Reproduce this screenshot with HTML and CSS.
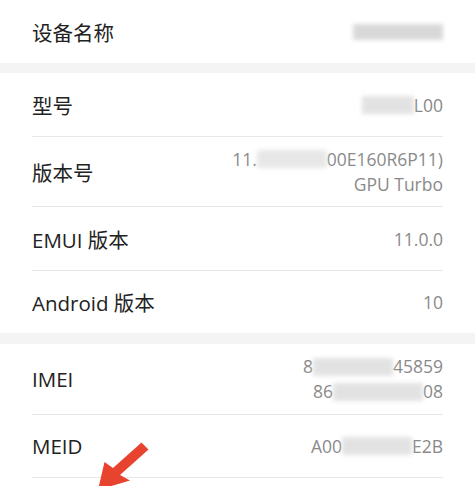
FILE: index.html
```html
<!DOCTYPE html>
<html>
<head>
<meta charset="utf-8">
<link rel="stylesheet" href="styles.css">
</head>
<body>
<div class="page">
  <section class="group">
    <div class="row r63">
      <span class="label">设备名称</span>
      <span class="value"><span class="blur b-name"></span></span>
    </div>
  </section>
  <div class="gap g10"></div>
  <section class="group">
    <div class="row r64 line">
      <span class="label">型号</span>
      <span class="value"><span class="blur b-model"></span>L00</span>
    </div>
    <div class="row r70 line">
      <span class="label">版本号</span>
      <span class="value multi"><span>11.<span class="blur b-ver"></span>00E160R6P11)</span><span>GPU Turbo</span></span>
    </div>
    <div class="row r64 line">
      <span class="label">EMUI 版本</span>
      <span class="value">11.0.0</span>
    </div>
    <div class="row r62">
      <span class="label">Android 版本</span>
      <span class="value">10</span>
    </div>
  </section>
  <div class="gap g11"></div>
  <section class="group">
    <div class="row r71 line">
      <span class="label">IMEI</span>
      <span class="value multi"><span>8<span class="blur b-imei1"></span>45859</span><span>86<span class="blur b-imei2"></span>08</span></span>
    </div>
    <div class="row r63 line">
      <span class="label">MEID</span>
      <span class="value">A00<span class="blur b-meid"></span>E2B</span>
    </div>
    <div class="row r63"></div>
  </section>
  <svg class="arrow" width="80" height="60" viewBox="0 0 80 60">
    <path d="M61.5 6.5 L68.5 13.5 L40 39 L50 44.5 L18 54 L24.5 26 L33 32 Z" fill="#e8432f"/>
  </svg>
</div>
</body>
</html>
```
FILE: styles.css
```css
html, body {
  margin: 0;
  padding: 0;
  background: #ffffff;
}
.page {
  position: relative;
  width: 475px;
  height: 486px;
  overflow: hidden;
  font-family: "Open Sans", "Noto Sans CJK SC", sans-serif;
}
.group {
  background: #ffffff;
}
.gap {
  background: #f4f4f4;
}
.g10 { height: 10px; }
.g11 { height: 11px; }
.row {
  display: flex;
  align-items: center;
  justify-content: space-between;
  margin: 0 32px;
  box-sizing: border-box;
}
.line {
  border-bottom: 1px solid #e8e8e8;
}
.r62 { height: 62px; }
.r63 { height: 63px; }
.r64 { height: 64px; }
.r70 { height: 70px; }
.r71 { height: 71px; }
.label {
  font-size: 20.5px;
  font-weight: 400;
  color: #222222;
}
.value {
  font-size: 17.5px;
  font-weight: 400;
  color: #8a8a8a;
  text-align: right;
  display: flex;
  align-items: center;
}
.multi {
  flex-direction: column;
  align-items: flex-end;
  line-height: 25px;
}
.multi > span {
  display: flex;
  align-items: center;
}
.blur {
  display: inline-block;
  height: 18px;
  background: #dcdcdc;
  filter: blur(2px);
  opacity: 0.8;
}
.b-name { width: 90px; height: 16px; background: #cfcfcf; }
.b-model { width: 52px; }
.b-ver { width: 70px; background: #e2e2e2; }
.b-imei1 { width: 80px; }
.b-imei2 { width: 90px; }
.b-meid { width: 70px; }
.arrow {
  position: absolute;
  left: 80px;
  top: 436px;
}
```
